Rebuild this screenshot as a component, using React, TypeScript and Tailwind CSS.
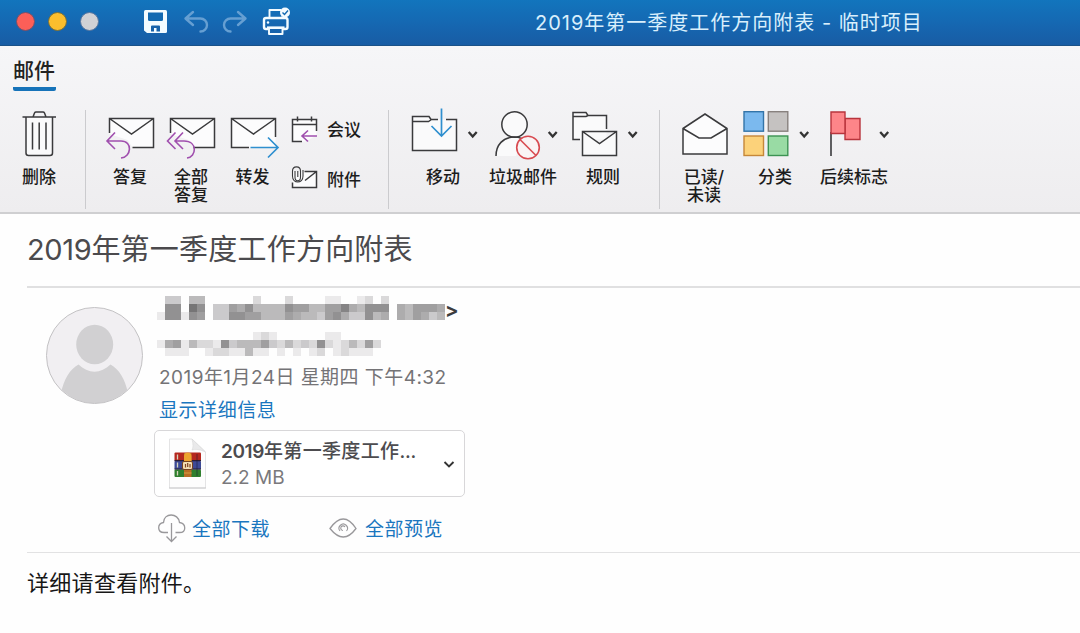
import type { ReactNode } from 'react';

const INK = '#3a3a3c';
const PURPLE = '#a04fae';
const BLUE = '#2f8fcf';

function Chevron({ x, y }: { x: number; y: number }) {
  return <path d={`M${x - 4} ${y - 2.5} l4 4.5 l4 -4.5`} fill="none" stroke="#333" strokeWidth="2.3" />;
}

function Envelope({ x }: { x: number }) {
  return (
    <>
      <path d={`M${x} 134 V118.5 H${x + 44} V147.5 H${x + 23} L${x + 18} 140 Z`} fill="#fcfcfd" />
      <path d={`M${x} 133 V118.5 H${x + 44} V147.5 H${x + 23} M${x} 118.5 l22 15.5 l22 -15.5`} fill="none" stroke={INK} strokeWidth="1.5" />
    </>
  );
}

type ToolProps = { x: number; w: number; label: ReactNode; box: string; children: ReactNode };

function Tool({ x, w, label, box, children }: ToolProps) {
  return (
    <button className={`flex shrink-0 flex-col items-center ${box}`}>
      <svg width={w} height="56" viewBox={`${x} 104 ${w} 56`} className="block overflow-visible">
        {children}
      </svg>
      <span className="mt-2 text-center text-[17px] leading-[18px] font-medium whitespace-nowrap text-[#1c1c1c]">{label}</span>
    </button>
  );
}

function Divider({ box }: { box: string }) {
  return <div className={`mt-[6px] h-[99px] w-px shrink-0 bg-[#cbcbce] ${box}`} />;
}

function TitleBar() {
  return (
    <header className="flex h-[46px] items-center border-b border-[#1b5288] bg-linear-to-b from-[#1275bd] via-[#1568b2] to-[#185ca4]">
      <div className="ml-4 flex gap-[13px] pb-[3px]">
        <i className="size-[19px] rounded-full border border-[#7a5068] bg-[#fc5f58]" />
        <i className="size-[19px] rounded-full border border-[#7c7138] bg-[#fbbe2d]" />
        <i className="size-[19px] rounded-full border border-[#5675a0] bg-[#d1d1d5]" />
      </div>
      <svg width="150" height="34" viewBox="142 5 150 34" className="ml-[43px] shrink-0" fill="none">
        <path d="M145.500 9H165.500a1.500 1.500 0 0 1 1.500 1.500V30.500a1.500 1.500 0 0 1-1.500 1.500H147L144 29.500V10.500A1.500 1.500 0 0 1 145.500 9Z" fill="#f3fbff" />
        <path d="M148 11.500h15v7q0 1.500-1.500 1.500h-12q-1.500 0-1.500-1.500Z" fill="#1269b1" />
        <path d="M151 30.500v-5q0-1 1-1h7q1 0 1 1v5h-3.500v-3.500h-2.500v3.500Z" fill="#1762aa" />
        <g stroke="#669fd2" strokeWidth="2.400" strokeLinecap="round" strokeLinejoin="round">
          <path d="M193 11l-7.500 6.500 7.500 6.500M186 17.500h14.500a6.500 6.500 0 0 1 0 13" />
          <path d="M238 11l7.500 6.500-7.500 6.500M245 17.500h-14.500a6.500 6.500 0 0 0 0 13" />
        </g>
        <g stroke="#f3fbff" strokeWidth="1.900" strokeLinejoin="round">
          <path d="M269.500 17V9H281M282 17v-1.500" />
          <path d="M268.500 28H266a2 2 0 0 1-2-2v-7a2 2 0 0 1 2-2h19.500a2 2 0 0 1 2 2v7a2 2 0 0 1-2 2H283" strokeWidth="2.400" />
          <path d="M269 27h13.500v6H269Z" />
          <path d="M267 26.500h17.500" strokeWidth="2.200" />
        </g>
        <circle cx="268" cy="21.500" r="1.200" fill="#f3fbff" />
        <circle cx="285" cy="11.500" r="5" fill="#f3fbff" />
        <path d="M282.500 11.500l2 2 3.500-4" stroke="#1269b1" strokeWidth="1.400" />
      </svg>
      <h1 className="ml-[243px] text-[20px] tracking-[1px] whitespace-nowrap text-[#d9effc]">
        2019年第一季度工作方向附表 - 临时项目
      </h1>
    </header>
  );
}

function Ribbon() {
  return (
    <section className="h-[168px] border-b-2 border-[#cfcfd1] bg-linear-to-b from-[#f6f6f8] to-[#eeedef]">
      <nav className="flex h-[58px] pl-[13px]">
        <div className="h-[45px] w-[43px] rounded-b-[2px] border-b-[4px] border-[#1673b9] pt-[10px] text-[21px] leading-[30px] font-medium whitespace-nowrap text-[#222]">邮件</div>
      </nav>
      <div className="flex h-[108px] items-start">
        <Tool x={20} w={38} label="删除" box="ml-5 w-[38px]">
          <path d="M26 117V153q0 2.500 2.500 2.500H50q2.500 0 2.500-2.500V117Z" fill="#fafafb" />
          <path d="M22.500 117H56M26 117V153q0 2.500 2.500 2.500H50q2.500 0 2.500-2.500V117M33 117l1.500-4q.5-1 1.500-1h7q1 0 1.500 1l1.500 4M32.500 122.500V149.500M39.200 122.500V149.500M46 122.500V149.500" fill="none" stroke={INK} strokeWidth="1.500" />
        </Tool>
        <Divider box="ml-[27px]" />
        <Tool x={104} w={52} label="答复" box="ml-[18px] w-[52px]">
          <Envelope x={109.5} />
          <path d="M115 132.500l-8 8.500 8 8M107 141h14c12 0 10.500 16 0 17" fill="none" stroke={PURPLE} strokeWidth="1.600" />
        </Tool>
        <Tool x={166} w={50} label={<>全部<br />答复</>} box="ml-[10px] w-[50px]">
          <Envelope x={170.5} />
          <path d="M175.500 132.500l-8 8.500 8 8M183 132.500l-8 8.500 8 8M175 141h9c14 0 12.500 16 3 17" fill="none" stroke={PURPLE} strokeWidth="1.600" />
        </Tool>
        <Tool x={225} w={55} label="转发" box="ml-[9px] w-[55px]">
          <path d="M231.500 118.500h44v29h-44Z" fill="#fcfcfd" />
          <path d="M275.500 137V118.500H231.500V147.500H249M231.500 118.500l22 15.500 22-15.500" fill="none" stroke={INK} strokeWidth="1.500" />
          <path d="M250.500 147.500H277.500M268 137.500l10 10-10 10" fill="none" stroke={BLUE} strokeWidth="1.700" />
        </Tool>
        <div className="ml-[11px] flex w-[72px] flex-col text-[17px] font-medium whitespace-nowrap text-[#1c1c1c]">
          <div className="flex h-[50px] items-center gap-[9px]">
            <svg width="27" height="32" viewBox="291 113 27 32" fill="none">
              <path d="M292.500 119.500h24v16l-11 6h-13Z" fill="#fcfcfd" />
              <path d="M302 141.500H292.500V119.500H316.500V131M292.500 124.500h24M297.500 116.500v5M311.500 116.500v5" stroke={INK} strokeWidth="1.500" />
              <path d="M317 136H303M308 130.500l-6 5.500 6 5.500" stroke={PURPLE} strokeWidth="1.600" />
            </svg>
            <span className="pt-[3px]">会议</span>
          </div>
          <div className="flex h-[50px] items-center gap-[9px]">
            <svg width="27" height="28" viewBox="291 165 27 28" fill="none">
              <path d="M292.500 171.500h24v16h-24Z" fill="#fcfcfd" />
              <path d="M292.500 182.500V187.500H316.500V171.500H304.500M305 180.500l11.500-9" stroke={INK} strokeWidth="1.500" />
              <path d="M295 171v6c0 5 5.500 5 5.500 0v-6c0-5.500-8-5.500-8 0v5c0 8 10.500 8 10.500 0v-6M297.800 171v6" stroke={INK} strokeWidth="1.100" />
            </svg>
            <span className="pt-[4px]">附件</span>
          </div>
        </div>
        <Divider box="ml-[25px]" />
        <Tool x={408} w={70} label="移动" box="ml-[19px] w-[70px]">
          <path d="M412.500 117V150.500H456.500V119.500H431l-2-3H412.500Z" fill="#fafafb" />
          <path d="M438 119.500H431l-2-3H412.500V150.500H456.500V119.500H446M412.500 121.500h16l3-2" fill="none" stroke={INK} strokeWidth="1.500" />
          <path d="M441.500 108.500V136M431.500 126l10 10 10-10" fill="none" stroke={BLUE} strokeWidth="1.700" />
          <Chevron x={472.7} y={134.5} />
        </Tool>
        <Tool x={488} w={70} label="垃圾邮件" box="ml-[10px] w-[70px]">
          <path d="M496 156c0-11 7-19 18.500-19 4 0 6 .7 8 1.800L516 156Z" fill="#fafafb" />
          <circle cx="514.500" cy="124.500" r="12.700" fill="#fafafb" stroke={INK} strokeWidth="1.500" />
          <path d="M496 156c0-11 7-19 18.500-19 3.500 0 5 .5 7 1.500" fill="none" stroke={INK} strokeWidth="1.500" />
          <circle cx="528" cy="147.500" r="11.300" fill="#faf4f5" stroke="#d84a50" strokeWidth="1.600" />
          <path d="M520 139.500l16 16" stroke="#d84a50" strokeWidth="1.600" />
          <Chevron x={552.7} y={134.5} />
        </Tool>
        <Tool x={568} w={70} label="规则" box="ml-[10px] w-[70px]">
          <path d="M573 112.500h13l2 3h18.500v24H573Z" fill="#fafafb" />
          <path d="M580 139.500H573V112.500h13l2 3h18.500V129M573 116.500h13l2-1" fill="none" stroke={INK} strokeWidth="1.500" />
          <path d="M582.500 131.500h34v24h-34Zl17 12 17-12" fill="#fafafb" stroke={INK} strokeWidth="1.500" />
          <Chevron x={632.7} y={134.5} />
        </Tool>
        <Divider box="ml-[21px]" />
        <Tool x={679} w={50} label={<>已读/<br />未读</>} box="ml-[19px] w-[50px]">
          <path d="M683 128.500L705 114l22 14.500V154H683Z" fill="#fcfcfd" />
          <path d="M683 128.500L705 114l22 14.500V154H683ZL699 138h12l16-9.500" fill="none" stroke={INK} strokeWidth="1.500" />
        </Tool>
        <Tool x={741} w={68} label="分类" box="ml-[12px] w-[68px]">
          <rect x="744" y="111.700" width="19.500" height="19.500" fill="#7bb9ee" stroke="#3374a8" strokeWidth="1.400" />
          <rect x="768.300" y="111.700" width="19.500" height="19.500" fill="#c5c2c1" stroke="#88817e" strokeWidth="1.400" />
          <rect x="744" y="136" width="19.500" height="19.500" fill="#fcd27a" stroke="#c68739" strokeWidth="1.400" />
          <rect x="768.300" y="136" width="19.500" height="19.500" fill="#99dba4" stroke="#3c9353" strokeWidth="1.400" />
          <Chevron x={804.2} y={134.5} />
        </Tool>
        <Tool x={819} w={70} label="后续标志" box="ml-[10px] w-[70px]">
          <path d="M831 132V156" stroke={INK} strokeWidth="1.600" />
          <path d="M845 118.500h15v21h-15Z" fill="#fd8589" stroke="#b8343c" strokeWidth="1.400" />
          <path d="M831 112h14v21.500H831Z" fill="#fd8589" stroke="#b8343c" strokeWidth="1.400" />
          <Chevron x={884.2} y={134.5} />
        </Tool>
      </div>
    </section>
  );
}

/* One hex digit per cell: the grey level, f being blank. */
const SENDER_ROWS = [
  'fccfbbffffffdfffdffffeeffedfdfffffff',
  'f88f68fcc9a8bbbb899bb997ab888fab999a',
  'e88e89fcc8899bbb9abbc98acc8bafab9acb',
];
const RECIPIENT_ROWS = [
  'ffffffffffffedeffffffeefffffffffffff',
  'ea9ebdde8cbbb9cdbdcd8dedbd9dffffffff',
  'feeeffeddeebeefefefedfedeeefffffffff',
];
const SHADES: Record<string, string> = {
  '6': 'bg-[#767576]', '7': 'bg-[#858485]', '8': 'bg-[#929192]', '9': 'bg-[#a09fa0]',
  a: 'bg-[#adacad]', b: 'bg-[#bbbabb]', c: 'bg-[#cbcacc]', d: 'bg-[#dad9da]', e: 'bg-[#ebeaeb]', f: 'bg-transparent',
};

function Redacted({ rows }: { rows: string[] }) {
  return (
    <div className="flex flex-col">
      {rows.map((row, r) => (
        <div key={r} className="flex h-2">
          {row.split('').map((c, i) => (
            <i key={i} className={`h-2 w-2 ${SHADES[c]}`} />
          ))}
        </div>
      ))}
    </div>
  );
}

function Avatar() {
  return (
    <svg width="98" height="98" viewBox="46 307 98 98" className="mt-[19px] block shrink-0">
      <clipPath id="disc"><circle cx="94.500" cy="355.500" r="47.500" /></clipPath>
      <circle cx="94.500" cy="355.500" r="48" fill="#f1eff2" />
      <g clipPath="url(#disc)" fill="#d1d0d2">
        <path d="M61 405V393C64 379 70 369 78.500 364.500C88 374 101 374 110.500 364.500C119 369 125 379 128 393V405Z" />
        <ellipse cx="94.700" cy="344.500" rx="18.500" ry="19.700" />
      </g>
      <circle cx="94.500" cy="355.500" r="48" fill="none" stroke="#c3c2c4" />
    </svg>
  );
}

function ArchiveIcon() {
  return (
    <svg width="38" height="52" viewBox="168 437 38 52" className="shrink-0">
      <path d="M169.500 438H192l13.500 13V487H169.500Z" fill="#fdfdfd" stroke="#e4e4e5" />
      <path d="M169 487h37" stroke="#c9c9ca" />
      <path d="M192 438q2 8 0 11 5-2 13.500 2Z" fill="#e9e9ea" stroke="#d8d8d9" strokeWidth=".6" />
      <rect x="174.500" y="451.500" width="26.500" height="8.500" rx="1" fill="#b5281f" />
      <rect x="174.500" y="460" width="26.500" height="8.500" rx="1" fill="#3d4a96" />
      <rect x="174.500" y="468.500" width="26.500" height="7.500" rx="1" fill="#2f7f2e" />
      <path d="M174.500 459.700h26.500M174.500 468h26.500" stroke="#2c1d34" strokeWidth="1.200" />
      <path d="M177.500 453.500v5M177.500 461.500v5M177.500 470v4.500" stroke="#d6d3bb" strokeWidth="1.300" />
      <path d="M197 453v22" stroke="#171b32" strokeWidth="1" opacity=".5" />
      <rect x="184" y="452" width="7.500" height="24" fill="#b86d25" />
      <path d="M184 460v-5q0-3.500 3.700-3.500t3.800 3.500v5Z" fill="#eda32f" />
      <rect x="182.500" y="460.500" width="10" height="8" rx="1.500" fill="#f2dfb5" stroke="#75441f" />
      <path d="M185.500 463v3.500M187.700 462v4M190 463v3.500" stroke="#7d4524" strokeWidth="1.200" />
      <path d="M184 472h7.500" stroke="#d6a044" strokeWidth="1" />
    </svg>
  );
}

function Message() {
  return (
    <main className="flex h-[419px] flex-col bg-[#fefefe] pl-[27px]">
      <h2 className="h-[74px] border-b-2 border-[#e0e0e1] pt-[15px] text-[29px] leading-[42px] tracking-[0.22px] whitespace-nowrap text-[#4b4a4d]">
        <span className="tracking-[-0.35px]">2019</span>年第一季度工作方向附表
      </h2>
      <div className="flex h-[265px] items-start border-b border-[#e2e2e3] pl-[19px]">
        <Avatar />
        <div className="ml-[10px] flex flex-col pt-[8px]">
          <div className="flex h-6 items-center pl-[3px]">
            <Redacted rows={SENDER_ROWS} />
            <span className="pt-[4px] text-[20px] leading-none font-bold text-[#3c3c3e]">&gt;</span>
          </div>
          <div className="mt-3 pl-[3px]"><Redacted rows={RECIPIENT_ROWS} /></div>
          <p className="mt-[8px] ml-[5px] text-[19px] leading-[28px] tracking-[0.45px] whitespace-nowrap text-[#747376]">2019年1月24日 星期四 下午4:32</p>
          <a className="mt-[5px] ml-[5px] text-[19px] leading-[28px] tracking-[0.55px] whitespace-nowrap text-[#1a76bf]">显示详细信息</a>
          <div className="mt-[5px] flex h-[67px] w-[311px] items-center rounded-[5px] border-[1.500px] border-[#d8d7d9] bg-white pl-[13px]">
            <ArchiveIcon />
            <div className="ml-[15px] w-[212px] pt-[3px] whitespace-nowrap">
              <div className="text-[19px] leading-[26px] font-medium tracking-[0.35px] text-[#4d4c4f]">
                <span className="font-semibold tracking-[-0.4px]">2019</span>年第一季度工作<span className="tracking-[-0.2px]">...</span>
              </div>
              <div className="text-[19px] leading-[26px] text-[#7a797c]">2.2 MB</div>
            </div>
            <svg width="14" height="12" viewBox="0 0 14 12" className="ml-[9px]"><path d="M2.500 4l4.500 4.500L11.500 4" fill="none" stroke="#333" strokeWidth="1.900" /></svg>
          </div>
          <div className="mt-[17px] flex h-7 items-center text-[19px] tracking-[0.5px] whitespace-nowrap text-[#1a76bf]">
            <svg width="29" height="30" viewBox="157 512 29 30" className="ml-[3px]" fill="none" stroke="#99989b" strokeWidth="1.300">
              <path d="M168 531.500h-4c-7 0-7-9-.5-10 0-10 15-10 16 0 7 1 7 10 0 10h-4M171.500 522V540M166.500 535.500l5 5 5-5" />
            </svg>
            <a className="ml-[6px] pt-[4px]">全部下载</a>
            <svg width="29" height="20" viewBox="329 517 29 20" className="ml-[59px]" fill="none" stroke="#99989b" strokeWidth="1.300">
              <path d="M330 527.500q13.500-19 26 0q-12.500 17-26 0Z" />
              <path d="M340 530a4.200 4.200 0 1 1 6.500 0M343 529.500a2.300 2.300 0 1 1 2-3.500" strokeWidth="1.100" />
            </svg>
            <a className="ml-[7px] pt-[4px]">全部预览</a>
          </div>
        </div>
      </div>
      <p className="pt-[13px] text-[22px] leading-[34px] tracking-[0.3px] text-[#171717]">详细请查看附件。</p>
    </main>
  );
}

export default function App() {
  return (
    <div className="h-[633px] w-[1080px] overflow-hidden font-['Inter','Noto_Sans_CJK_SC',sans-serif]">
      <TitleBar />
      <Ribbon />
      <Message />
    </div>
  );
}
